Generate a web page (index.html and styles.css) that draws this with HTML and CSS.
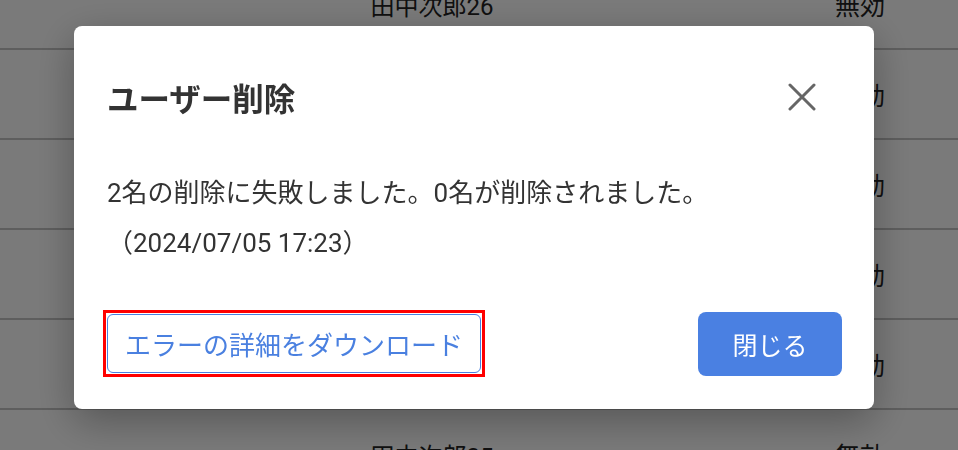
FILE: index.html
```html
<!DOCTYPE html>
<html lang="ja">
<head>
<meta charset="utf-8">
<title>ユーザー削除</title>
<link rel="stylesheet" href="styles.css">
</head>
<body>
<div class="table">
  <div class="row"><span class="c-name">田中次郎26</span><span class="c-status">無効</span></div>
  <div class="row"><span class="c-name">田中次郎27</span><span class="c-status">無効</span></div>
  <div class="row"><span class="c-name">田中次郎28</span><span class="c-status">無効</span></div>
  <div class="row"><span class="c-name">田中次郎29</span><span class="c-status">無効</span></div>
  <div class="row"><span class="c-name">田中次郎30</span><span class="c-status">無効</span></div>
  <div class="row"><span class="c-name">田中次郎25</span><span class="c-status">無効</span></div>
</div>
<div class="overlay">
  <div class="modal" role="dialog">
    <div class="modal-header">
      <h2 class="modal-title">ユーザー削除</h2>
      <button class="icon-close" aria-label="閉じる">
        <svg width="28" height="28" viewBox="0 0 28 28"><path d="M2 2 L26 26 M26 2 L2 26" stroke="#666" stroke-width="3" stroke-linecap="round" fill="none"/></svg>
      </button>
    </div>
    <div class="modal-body">
      <p class="msg">2名の削除に失敗しました。0名が削除されました。</p>
      <p class="msg">（2024/07/05 17:23）</p>
    </div>
    <div class="modal-footer">
      <span class="highlight"><button class="btn-outline">エラーの詳細をダウンロード</button></span>
      <button class="btn-primary">閉じる</button>
    </div>
  </div>
</div>
</body>
</html>
```
FILE: styles.css
```css
html, body {
  margin: 0;
  padding: 0;
  background: #ffffff;
  overflow: hidden;
  height: 450px;
  font-family: Roboto, "Noto Sans CJK JP", sans-serif;
}

.table {
  margin-top: -40px;
  display: flex;
  flex-direction: column;
}

.row {
  height: 88px;
  border-bottom: 2px solid #c4c4c4;
  display: grid;
  grid-template-columns: 327px 210px 263px 120px 38px;
  align-items: center;
  font-size: 24px;
  color: #222;
}

.c-name {
  grid-column: 2;
  text-align: center;
}

.c-status {
  grid-column: 4;
  text-align: center;
  font-size: 25px;
}

.overlay {
  position: fixed;
  inset: 0;
  background: rgba(0, 0, 0, 0.52);
  display: flex;
  align-items: flex-start;
  padding: 26px 0 0 74px;
}

.modal {
  width: 800px;
  height: 383px;
  box-sizing: border-box;
  background: #fff;
  border-radius: 8px;
  box-shadow: 0 12px 40px rgba(0, 0, 0, 0.3);
  padding: 42px 32px 32px 29px;
  display: flex;
  flex-direction: column;
}

.modal-header {
  height: 60px;
  padding-left: 4px;
  display: flex;
  align-items: center;
  justify-content: space-between;
}

.modal-title {
  margin: 0;
  font-size: 31.5px;
  font-weight: 700;
  color: #333;
  font-family: "Noto Sans CJK JP", sans-serif;
}

.icon-close {
  border: 0;
  background: none;
  padding: 0;
  width: 28px;
  height: 28px;
  margin-right: 26px;
  display: flex;
}

.modal-body {
  margin-top: 43px;
  padding-left: 4px;
}

.msg {
  margin: 0;
  font-size: 26px;
  line-height: 50px;
  color: #333;
}

.modal-footer {
  margin-top: 42px;
  display: flex;
  justify-content: space-between;
  align-items: center;
}

.highlight {
  display: flex;
  border: 3px solid #ff0000;
  padding: 1px;
}

.btn-outline {
  height: 59px;
  padding: 0 17px;
  border: 1px solid #4a80e0;
  border-radius: 6px;
  background: #fff;
  color: #4a80e0;
  font-family: "Noto Sans CJK JP", sans-serif;
  font-size: 26px;
}

.btn-primary {
  width: 144px;
  height: 64px;
  border: 0;
  border-radius: 8px;
  background: #4a80e2;
  color: #fff;
  font-family: "Noto Sans CJK JP", sans-serif;
  font-size: 25px;
}
```
